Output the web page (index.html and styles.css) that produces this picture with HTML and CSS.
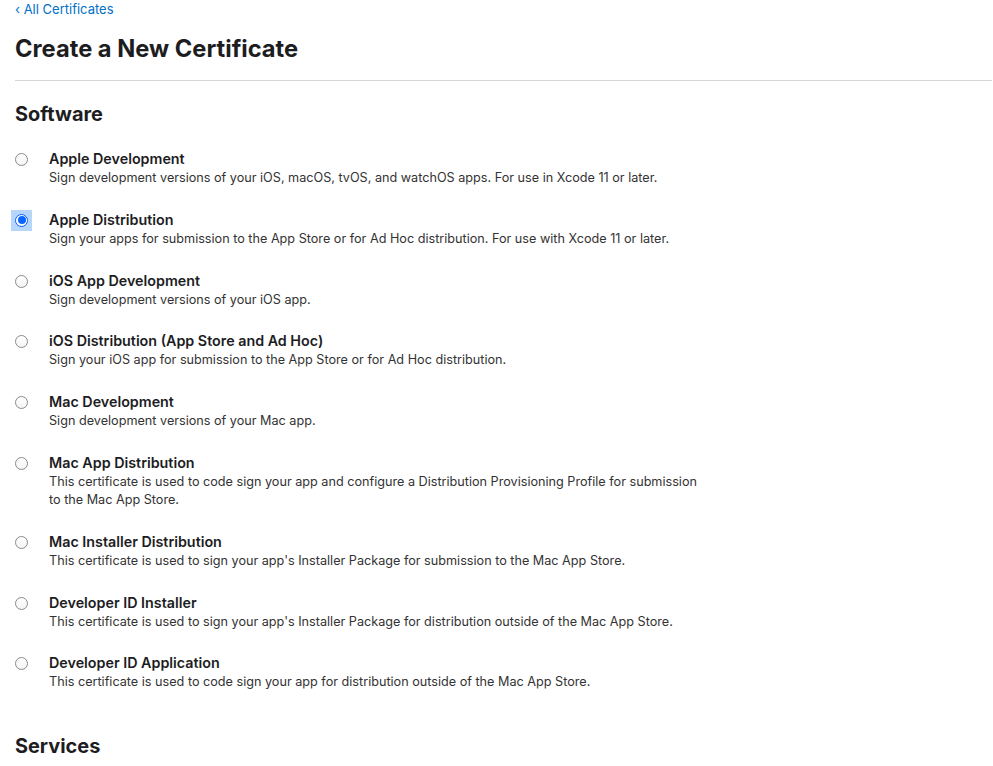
FILE: index.html
```html
<!DOCTYPE html>
<html>
<head>
<meta charset="utf-8">
<link rel="stylesheet" href="styles.css">
</head>
<body>
<div class="page">
  <a class="back" href="#">&lsaquo; All Certificates</a>
  <h1 class="title">Create a New Certificate</h1>
  <hr class="rule">
  <h2 class="section">Software</h2>
  <ul class="options">
    <li class="option"><span class="radio"></span><div class="text"><div class="name">Apple Development</div><div class="desc">Sign development versions of your iOS, macOS, tvOS, and watchOS apps. For use in Xcode 11 or later.</div></div></li>
    <li class="option"><span class="radio checked"></span><div class="text"><div class="name">Apple Distribution</div><div class="desc">Sign your apps for submission to the App Store or for Ad Hoc distribution. For use with Xcode 11 or later.</div></div></li>
    <li class="option"><span class="radio"></span><div class="text"><div class="name">iOS App Development</div><div class="desc">Sign development versions of your iOS app.</div></div></li>
    <li class="option"><span class="radio"></span><div class="text"><div class="name">iOS Distribution (App Store and Ad Hoc)</div><div class="desc">Sign your iOS app for submission to the App Store or for Ad Hoc distribution.</div></div></li>
    <li class="option"><span class="radio"></span><div class="text"><div class="name">Mac Development</div><div class="desc">Sign development versions of your Mac app.</div></div></li>
    <li class="option"><span class="radio"></span><div class="text"><div class="name">Mac App Distribution</div><div class="desc">This certificate is used to code sign your app and configure a Distribution Provisioning Profile for submission to the Mac App Store.</div></div></li>
    <li class="option"><span class="radio"></span><div class="text"><div class="name">Mac Installer Distribution</div><div class="desc">This certificate is used to sign your app's Installer Package for submission to the Mac App Store.</div></div></li>
    <li class="option"><span class="radio"></span><div class="text"><div class="name">Developer ID Installer</div><div class="desc">This certificate is used to sign your app's Installer Package for distribution outside of the Mac App Store.</div></div></li>
    <li class="option"><span class="radio"></span><div class="text"><div class="name">Developer ID Application</div><div class="desc">This certificate is used to code sign your app for distribution outside of the Mac App Store.</div></div></li>
  </ul>
  <h2 class="section services">Services</h2>
</div>
</body>
</html>
```
FILE: styles.css
```css
html {
  background: #fff;
}
html, body {
  margin: 0;
  padding: 0;
}
body {
  font-family: Inter, "Helvetica Neue", Arial, sans-serif;
  color: #1d1d1f;
  -webkit-font-smoothing: antialiased;
}
.page {
  padding: 0 1px 0 15px;
}
.back {
  display: block;
  font-size: 13px;
  line-height: 18px;
  color: #0070c9;
  text-decoration: none;
}
.title {
  margin: 17px 0 0;
  font-size: 23.7px;
  line-height: 28px;
  font-weight: 700;
  letter-spacing: 0;
}
.rule {
  margin: 17px 0 0;
  border: 0;
  height: 1px;
  background: #d6d6d6;
}
.section {
  margin: 21px 0 0;
  font-size: 19.9px;
  line-height: 24px;
  font-weight: 700;
}
.options {
  list-style: none;
  margin: 23px 0 0;
  padding: 0;
  display: flex;
  flex-direction: column;
  gap: 22.8px;
}
.option {
  display: flex;
  align-items: flex-start;
  isolation: isolate;
}
.radio {
  flex: none;
  box-sizing: border-box;
  width: 13px;
  height: 13px;
  margin-top: 4px;
  margin-right: 21px;
  border-radius: 50%;
  border: 1px solid #8a8a8a;
  background: linear-gradient(#fff, #f4f4f4);
  position: relative;
}
.radio.checked {
  border: 1px solid #0a60ff;
  background: #fff;
}
.radio.checked::before {
  content: "";
  position: absolute;
  left: -5px;
  top: -5px;
  width: 21px;
  height: 21px;
  background: #b7d6fb;
  z-index: -1;
}
.radio.checked::after {
  content: "";
  position: absolute;
  left: 1.5px;
  top: 1.5px;
  width: 8px;
  height: 8px;
  border-radius: 50%;
  background: #0a66ff;
}
.text {
  width: 655px;
}
.name {
  font-size: 14.3px;
  line-height: 20px;
  font-weight: 600;
}
.desc {
  font-size: 12.65px;
  line-height: 18px;
  color: #333;
}
.services {
  margin-top: 43px;
}
```
